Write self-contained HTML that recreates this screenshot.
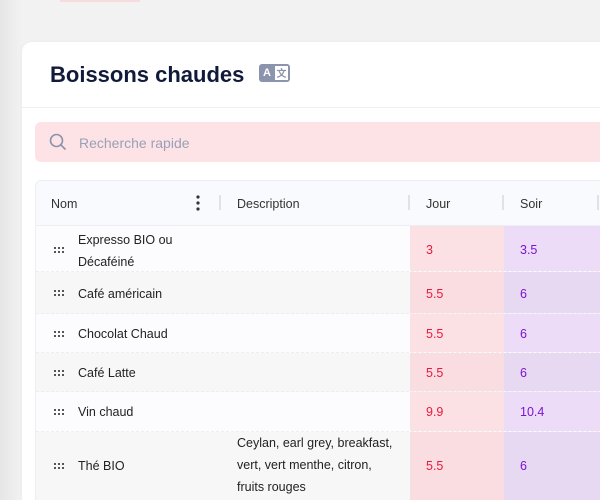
<!DOCTYPE html>
<html><head><meta charset="utf-8"><style>
*{margin:0;padding:0;box-sizing:border-box}
html,body{width:600px;height:500px;overflow:hidden}
body{background:#f2f2f2;font-family:"Liberation Sans",sans-serif;position:relative}
.shade{position:absolute;left:0;top:0;width:22px;height:500px;background:linear-gradient(90deg,#e6e6e6,#f2f2f2)}
.topbar{position:absolute;left:60px;top:0;width:80px;height:2px;background:#f6dcdf}
.card{position:absolute;left:22px;top:42px;width:600px;height:458px;background:#fff;border-radius:10px 0 0 0;box-shadow:0 0 4px rgba(0,0,0,.04)}
h1{position:absolute;left:50px;top:62px;font-size:22px;font-weight:bold;color:#111a3a}
.ic{position:absolute;left:259px;top:64px;width:31px;height:18px;border-radius:3px;background:#8c93ad}
.ic .a{position:absolute;left:4px;top:3px;font-size:11px;font-weight:bold;color:#fff}
.ic .b{position:absolute;left:16px;top:2px;width:13px;height:14px;background:#fff;color:#8c93ad;font-size:10px;text-align:center;line-height:14px;font-weight:bold;font-family:"Noto Sans CJK SC",sans-serif}
.div{position:absolute;left:22px;top:107px;width:578px;height:1px;background:#eeeff3}
.search{position:absolute;left:35px;top:122px;width:580px;height:40px;background:#fde3e6;border-radius:6px}
.search span{position:absolute;left:44px;top:13px;font-size:14px;color:#9aa0b6}
.tbl{position:absolute;left:35px;top:180px;width:580px;height:330px;border:1px solid #eceef3;border-radius:6px;overflow:hidden;background:#fcfcfe}
.hd{position:absolute;left:0;top:0;width:100%;height:45px;background:#f9fafd;border-bottom:1px solid #eceef3}
.t{position:absolute;font-size:12.5px;color:#222}
.h{color:#333;top:16px}
.sep{position:absolute;top:14px;width:2px;height:15px;background:#e0e2e8}
.row{position:absolute;left:0;width:100%;border-bottom:1px dashed #eee}
.even{background:#f8f7f7}
.j{position:absolute;left:374px;width:94px;height:100%;background:#fbe1e4}
.s{position:absolute;left:468px;width:100px;height:100%;background:#ecdcf7}
.even .j{background:#f9dde0}.even .s{background:#e8d9f2}
.r{color:#e8193f;left:390px}.p{color:#7c14d0;left:484px}
.dots{position:absolute;left:18px}
</style></head><body>
<div class="shade"></div><div class="topbar"></div>
<div class="card"></div>
<h1>Boissons chaudes</h1>
<div class="ic"><span class="a">A</span><span class="b">文</span></div>
<div class="div"></div>
<div class="search"><svg style="position:absolute;left:14px;top:11px" width="18" height="18" viewBox="0 0 18 18"><circle cx="7.5" cy="7.5" r="6" fill="none" stroke="#8c93ad" stroke-width="1.6"/><line x1="12" y1="12" x2="16.5" y2="16.5" stroke="#8c93ad" stroke-width="1.6"/></svg><span>Recherche rapide</span></div>
<svg width="0" height="0" style="position:absolute"><defs><g id="d" fill="#555"><rect x="0" y="0" width="2" height="2"/><rect x="4" y="0" width="2" height="2"/><rect x="8" y="0" width="2" height="2"/><rect x="0" y="4" width="2" height="2"/><rect x="4" y="4" width="2" height="2"/><rect x="8" y="4" width="2" height="2"/></g></defs></svg>
<div class="tbl">
<div class="hd">
<span class="t h" style="left:15px">Nom</span>
<svg style="position:absolute;left:160px;top:14px" width="4" height="16"><circle cx="2" cy="2" r="1.6" fill="#333"/><circle cx="2" cy="8" r="1.6" fill="#333"/><circle cx="2" cy="14" r="1.6" fill="#333"/></svg>
<div class="sep" style="left:183px"></div>
<span class="t h" style="left:201px">Description</span>
<div class="sep" style="left:372px"></div>
<span class="t h" style="left:390px">Jour</span>
<div class="sep" style="left:466px"></div>
<span class="t h" style="left:484px">Soir</span>
<div class="sep" style="left:561px"></div>
</div>
<div class="row" style="top:45px;height:46px"><div class="j"></div><div class="s"></div><svg class="dots" style="top:21px" width="10" height="6"><use href="#d"/></svg><span class="t" style="left:42px;top:3px;line-height:22px">Expresso BIO ou<br>Décaféiné</span><span class="t r" style="top:17px">3</span><span class="t p" style="top:17px">3.5</span></div>
<div class="row even" style="top:91px;height:42px"><div class="j"></div><div class="s"></div><svg class="dots" style="top:18px" width="10" height="6"><use href="#d"/></svg><span class="t" style="left:42px;top:15px">Café américain</span><span class="t r" style="top:15px">5.5</span><span class="t p" style="top:15px">6</span></div>
<div class="row" style="top:133px;height:39px"><div class="j"></div><div class="s"></div><svg class="dots" style="top:17px" width="10" height="6"><use href="#d"/></svg><span class="t" style="left:42px;top:13px">Chocolat Chaud</span><span class="t r" style="top:13px">5.5</span><span class="t p" style="top:13px">6</span></div>
<div class="row even" style="top:172px;height:39px"><div class="j"></div><div class="s"></div><svg class="dots" style="top:17px" width="10" height="6"><use href="#d"/></svg><span class="t" style="left:42px;top:13px">Café Latte</span><span class="t r" style="top:13px">5.5</span><span class="t p" style="top:13px">6</span></div>
<div class="row" style="top:211px;height:40px"><div class="j"></div><div class="s"></div><svg class="dots" style="top:17px" width="10" height="6"><use href="#d"/></svg><span class="t" style="left:42px;top:13px">Vin chaud</span><span class="t r" style="top:13px">9.9</span><span class="t p" style="top:13px">10.4</span></div>
<div class="row even" style="top:251px;height:80px"><div class="j"></div><div class="s"></div><svg class="dots" style="top:31px" width="10" height="6"><use href="#d"/></svg><span class="t" style="left:42px;top:27px">Thé BIO</span><span class="t" style="left:201px;top:0px;line-height:22px">Ceylan, earl grey, breakfast,<br>vert, vert menthe, citron,<br>fruits rouges</span><span class="t r" style="top:27px">5.5</span><span class="t p" style="top:27px">6</span></div>
</div>
</body></html>
